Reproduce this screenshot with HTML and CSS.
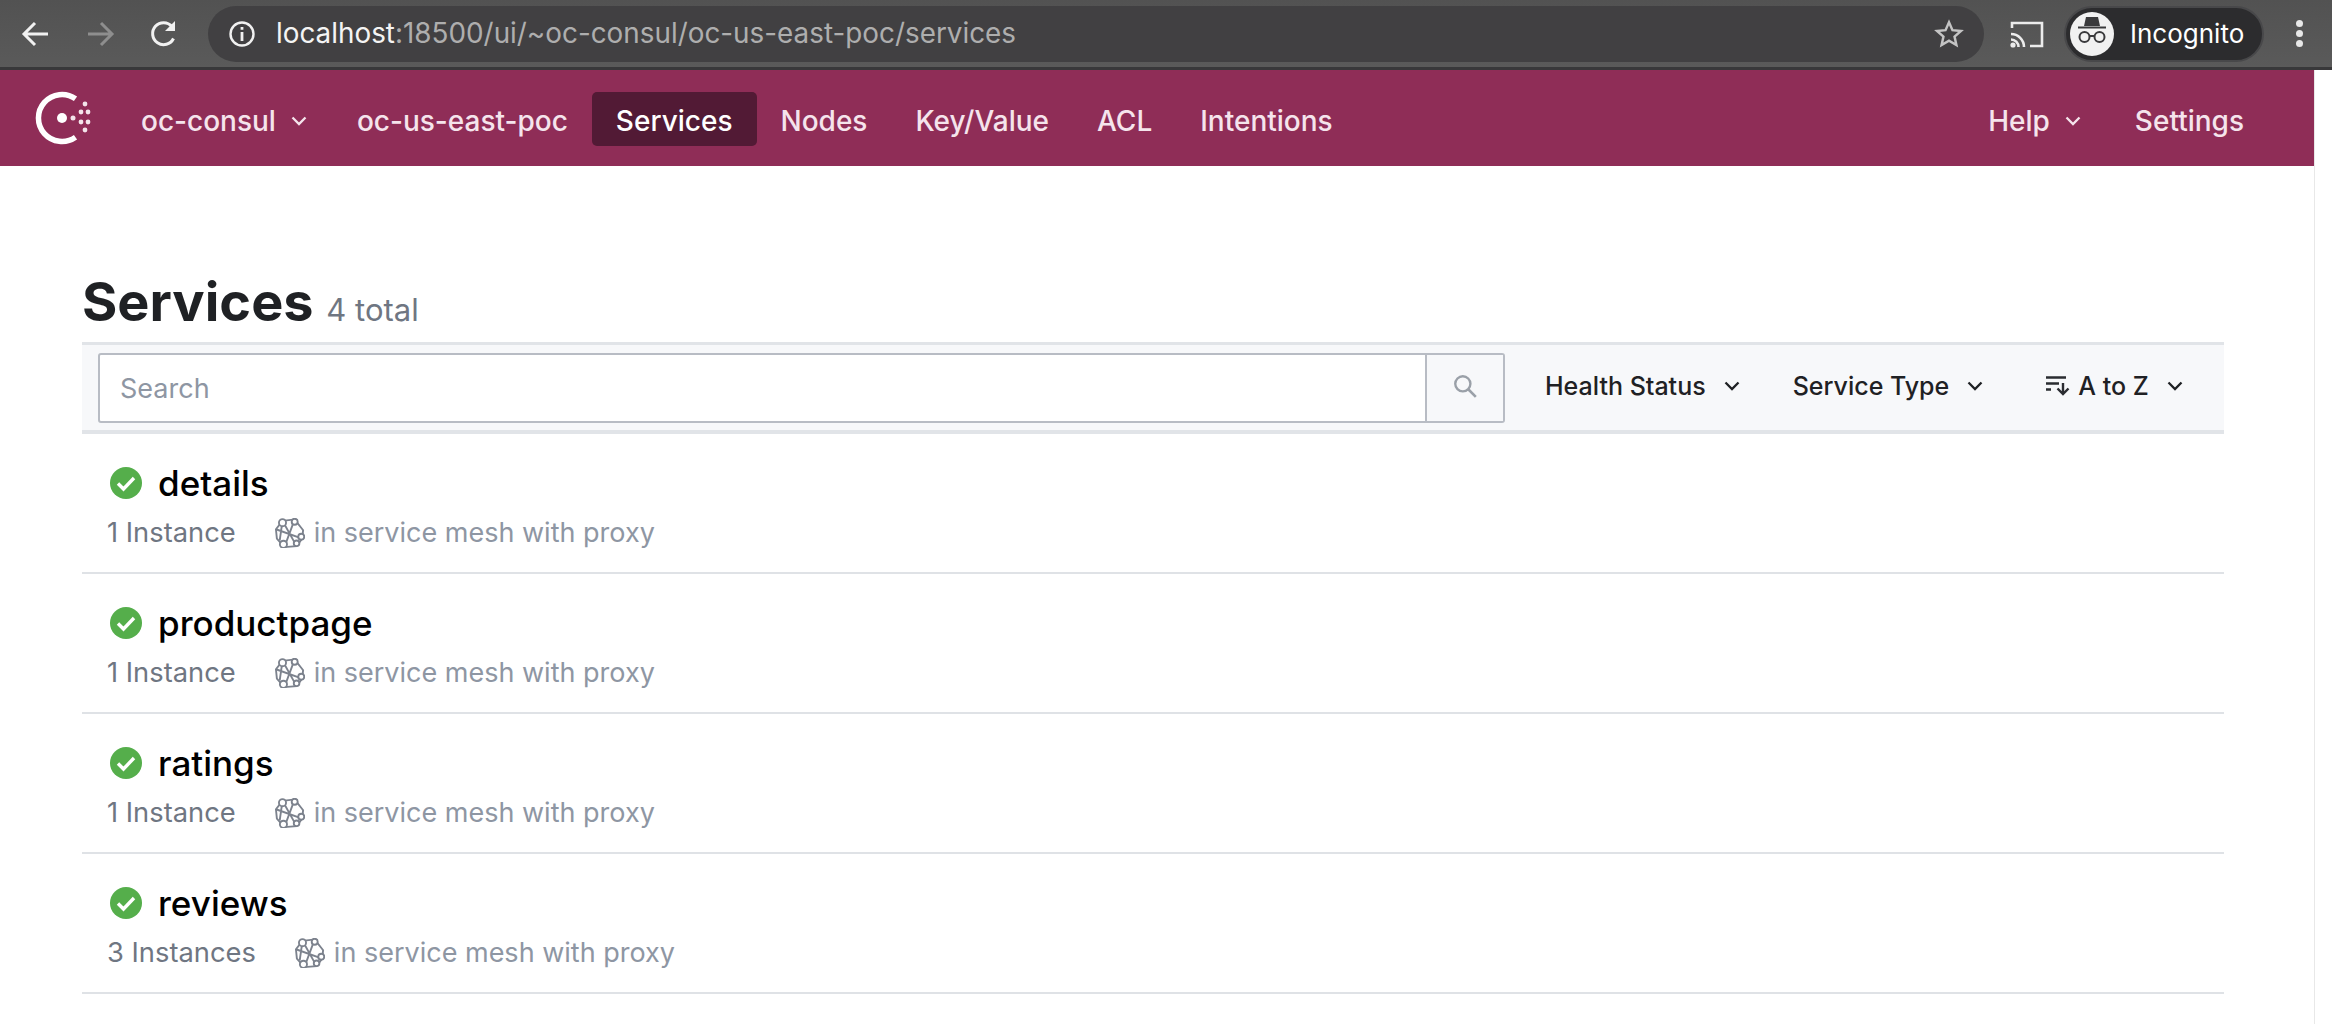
FILE: index.html
```html
<!DOCTYPE html>
<html lang="en">
<head>
    <meta charset="UTF-8">
    <title>Services - Consul</title>
    <link rel="stylesheet" href="styles.css">
</head>
<body>
    <svg class="defs" width="0" height="0">
        <symbol id="chev" viewBox="0 0 16 16"><path d="M1.500 4.500 8 11l6.500-6.500" fill="none" stroke="currentColor" stroke-width="2.300"/></symbol>
        <symbol id="check" viewBox="0 0 32 32"><circle cx="16" cy="16" r="16" fill="#55ae4b"/><path d="M8 16.500l5.500 5.500L24 11" fill="none" stroke="#fff" stroke-width="3.400"/></symbol>
        <symbol id="mesh" viewBox="0 0 32 32">
            <g fill="none" stroke="#7c828d" stroke-width="2">
                <path d="M8 3 21 1.500 30 13l-1 9-6 8-13 1-8-9-1-10z"/>
                <path d="M8 3 23 30M21 1.500 10 31M29 22 1 12M8 3 5 24"/>
            </g>
            <g fill="#fff" stroke="#7c828d" stroke-width="2">
                <circle cx="8" cy="5" r="3.800"/><circle cx="21" cy="4" r="3.200"/><circle cx="28" cy="20" r="3.200"/>
                <circle cx="9" cy="28" r="3.800"/><circle cx="23" cy="27" r="3"/>
            </g>
        </symbol>
    </svg>

    <header class="browser">
        <div class="browser-nav">
            <svg class="tool" viewBox="0 0 32 32"><path d="M28 16H5M15 5 4 16l11 11" fill="none" stroke="#f1f1f1" stroke-width="3"/></svg>
            <svg class="tool" viewBox="0 0 32 32"><path d="M4 16h23M17 5l11 11-11 11" fill="none" stroke="#8e8e8e" stroke-width="3"/></svg>
            <svg class="tool" viewBox="0 0 32 32"><path d="M25.500 20.500A11 11 0 1 1 24 8.500" fill="none" stroke="#f1f1f1" stroke-width="3"/><path d="M27 3v10H17z" fill="#f1f1f1"/></svg>
        </div>
        <div class="omnibox">
            <svg class="info" viewBox="0 0 28 28"><circle cx="14" cy="14" r="11.500" fill="none" stroke="#f1f1f1" stroke-width="2.400"/><path d="M12.600 12h2.800v9h-2.800zM12.600 7h2.800v2.800h-2.800z" fill="#f1f1f1"/></svg>
            <span class="url"><b>localhost</b>:18500/ui/~oc-consul/oc-us-east-poc/services</span>
            <svg class="star" viewBox="0 0 32 32"><path d="M16 3.500l3.700 8.400 9.100.9-6.900 6 2 9-7.900-4.700-7.900 4.700 2-9-6.900-6 9.100-.9z" fill="none" stroke="#c4c4c4" stroke-width="2.600"/></svg>
        </div>
        <svg class="cast" viewBox="0 0 34 28"><path d="M2 8V3h30v23H20" fill="none" stroke="#ececec" stroke-width="2.600"/><path d="M1 14a13 13 0 0 1 13 13M1 19.500a7.500 7.500 0 0 1 7.500 7.500" fill="none" stroke="#ececec" stroke-width="2.600"/><circle cx="3" cy="25" r="2.600" fill="#ececec"/></svg>
        <div class="profile">
            <svg class="avatar" viewBox="0 0 44 44">
                <circle cx="22" cy="22" r="22" fill="#f1f1f1"/>
                <path d="M16 5h12l2 9H14z" fill="#3a3a3c"/>
                <path d="M8 15.500h28" stroke="#3a3a3c" stroke-width="2"/>
                <circle cx="14.500" cy="25" r="5" fill="none" stroke="#3a3a3c" stroke-width="2"/>
                <circle cx="29.500" cy="25" r="5" fill="none" stroke="#3a3a3c" stroke-width="2"/>
                <path d="M19.500 24h5" stroke="#3a3a3c" stroke-width="2"/>
            </svg>
            <span>Incognito</span>
        </div>
        <div class="kebab"><i></i><i></i><i></i></div>
    </header>

    <div class="viewport">
        <div class="page">
            <nav class="topnav">
                <svg class="logo" viewBox="0 0 60 60">
                    <path d="M41.500 10.800A23.500 23.500 0 1 0 41.500 49.200" fill="none" stroke="#fff" stroke-width="5.500"/>
                    <circle cx="28" cy="30" r="5" fill="#fff"/><circle cx="39" cy="30" r="2.500" fill="#f3e4ea"/>
                    <circle cx="51" cy="16" r="2.400" fill="#f3e4ea"/><circle cx="47" cy="24" r="2.400" fill="#f3e4ea"/><circle cx="54" cy="24" r="2.400" fill="#f3e4ea"/>
                    <circle cx="47" cy="34" r="2.400" fill="#f3e4ea"/><circle cx="54" cy="34" r="2.400" fill="#f3e4ea"/><circle cx="51" cy="42" r="2.400" fill="#f3e4ea"/>
                </svg>
                <a class="nav-item">oc-consul <svg class="chev"><use href="#chev"/></svg></a>
                <a class="nav-item">oc-us-east-poc</a>
                <a class="nav-item active">Services</a>
                <a class="nav-item">Nodes</a>
                <a class="nav-item">Key/Value</a>
                <a class="nav-item">ACL</a>
                <a class="nav-item">Intentions</a>
                <div class="spacer"></div>
                <a class="nav-item help">Help <svg class="chev"><use href="#chev"/></svg></a>
                <a class="nav-item">Settings</a>
            </nav>

            <main class="content">
                <h1>Services <small>4 total</small></h1>

                <div class="toolbar">
                    <div class="search">
                        <span class="placeholder">Search</span>
                        <span class="search-btn">
                            <svg viewBox="0 0 24 24"><circle cx="10" cy="10" r="7" fill="none" stroke="#9aa0a8" stroke-width="2.200"/><path d="M15 15l7 7" stroke="#9aa0a8" stroke-width="2.400"/></svg>
                        </span>
                    </div>
                    <a class="filter health">Health Status <svg class="chev"><use href="#chev"/></svg></a>
                    <a class="filter type">Service Type <svg class="chev"><use href="#chev"/></svg></a>
                    <a class="filter sort">
                        <svg class="sort-icon" viewBox="0 0 24 20"><path d="M0 1.500h20M0 7.500h13M0 13.500h5M17 7v11M11.500 12.500 17 18l5.500-5.500" fill="none" stroke="#2a2c31" stroke-width="2.400"/></svg>
                        A to Z <svg class="chev"><use href="#chev"/></svg>
                    </a>
                </div>

                <ul class="services">
                    <li class="service">
                        <div class="name"><svg class="ok"><use href="#check"/></svg>details</div>
                        <div class="meta"><span class="count">1 Instance</span><svg class="mesh"><use href="#mesh"/></svg><span>in service mesh with proxy</span></div>
                    </li>
                    <li class="service">
                        <div class="name"><svg class="ok"><use href="#check"/></svg>productpage</div>
                        <div class="meta"><span class="count">1 Instance</span><svg class="mesh"><use href="#mesh"/></svg><span>in service mesh with proxy</span></div>
                    </li>
                    <li class="service">
                        <div class="name"><svg class="ok"><use href="#check"/></svg>ratings</div>
                        <div class="meta"><span class="count">1 Instance</span><svg class="mesh"><use href="#mesh"/></svg><span>in service mesh with proxy</span></div>
                    </li>
                    <li class="service">
                        <div class="name"><svg class="ok"><use href="#check"/></svg>reviews</div>
                        <div class="meta"><span class="count">3 Instances</span><svg class="mesh"><use href="#mesh"/></svg><span>in service mesh with proxy</span></div>
                    </li>
                </ul>
            </main>
        </div>
        <div class="scrollbar"></div>
    </div>
</body>
</html>
```

FILE: styles.css
```css
html, body {
    margin: 0;
    height: 1024px;
    overflow: hidden;
    background: #fff;
    font-family: Inter, "Noto Sans", sans-serif;
}
.defs {
    display: block;
    height: 0;
}

/* browser chrome */
.browser {
    height: 67px;
    border-bottom: 3px solid #38383a;
    background: linear-gradient(#525252, #5a5a5a);
    display: flex;
    align-items: center;
    color: #fff;
}
.browser-nav {
    display: flex;
    gap: 32px;
    padding-left: 20px;
    width: 208px;
    box-sizing: border-box;
}
.tool {
    width: 32px;
    height: 32px;
}
.omnibox {
    width: 1776px;
    height: 56px;
    border-radius: 28px;
    background: #414042;
    display: flex;
    align-items: center;
    box-sizing: border-box;
    padding: 0 20px;
}
.info {
    width: 28px;
    height: 28px;
    margin-right: 20px;
}
.url {
    flex: 1;
    padding-bottom: 2px;
    font-size: 27.850px;
    color: #aeaeae;
    white-space: nowrap;
}
.url b {
    font-weight: 400;
    color: #f4f4f4;
}
.star {
    width: 30px;
    height: 30px;
}
.cast {
    width: 34px;
    height: 28px;
    margin-left: 26px;
}
.profile {
    width: 200px;
    height: 56px;
    margin-left: 20px;
    box-sizing: border-box;
    border: 2px solid #48484a;
    border-radius: 28px;
    background: #2c2c2e;
    display: flex;
    align-items: center;
    gap: 16px;
    padding-left: 4px;
    font-size: 26px;
}
.avatar {
    width: 44px;
    height: 44px;
}
.kebab {
    margin-left: 32px;
    display: flex;
    flex-direction: column;
    gap: 3px;
}
.kebab i {
    width: 7px;
    height: 7px;
    border-radius: 50%;
    background: #e8e8e8;
}

.viewport {
    display: flex;
}
.page {
    flex: 1;
    min-width: 0;
}
.scrollbar {
    width: 17px;
    height: 954px;
    background: #fff;
    border-left: 1px solid #e8e8e8;
}

/* consul nav */
.topnav {
    height: 96px;
    background: #8f2d57;
    display: flex;
    align-items: center;
    padding: 0 46px 0 34px;
}
.logo {
    width: 60px;
    height: 60px;
    margin-right: 23px;
}
.nav-item {
    display: flex;
    align-items: center;
    height: 54px;
    box-sizing: border-box;
    margin-top: 2px;
    padding: 3px 24px 0;
    border-radius: 5px;
    color: #f5e4ec;
    font-size: 28px;
    font-weight: 500;
    white-space: nowrap;
}
.nav-item.active {
    background: #521a35;
    color: #fff;
}
.nav-item.help {
    margin-right: 4px;
}
.chev {
    width: 16px;
    height: 16px;
    margin: 0 2px 0 15px;
}
.spacer {
    flex: 1;
}

/* content */
.content {
    padding: 103px 90px 0 81px;
}
h1 {
    margin: 0;
    padding-left: 1px;
    font-size: 54px;
    line-height: 66px;
    font-weight: 700;
    color: #1f2124;
}
h1 small {
    font-size: 31px;
    line-height: 1;
    font-weight: 400;
    color: #6f7682;
}
.toolbar {
    margin: 7px 0 0 1px;
    height: 92px;
    box-sizing: border-box;
    background: #f7f8fa;
    border-top: 3px solid #e1e4e8;
    border-bottom: 4px solid #e1e4e8;
    display: flex;
    align-items: center;
    padding-left: 16px;
}
.search {
    width: 1407px;
    height: 70px;
    box-sizing: border-box;
    border: 2px solid #b8bcc4;
    border-radius: 3px;
    background: #fff;
    display: flex;
    align-items: center;
}
.placeholder {
    flex: 1;
    padding: 2px 0 0 20px;
    font-size: 27px;
    color: #8e96a3;
}
.search-btn {
    width: 78px;
    height: 100%;
    box-sizing: border-box;
    border-left: 2px solid #b8bcc4;
    background: #f7f8fa;
    padding-bottom: 4px;
    display: flex;
    align-items: center;
    justify-content: center;
}
.search-btn svg {
    width: 26px;
    height: 26px;
}
.filter {
    display: flex;
    align-items: center;
    padding-bottom: 3px;
    font-size: 25px;
    font-weight: 500;
    color: #1f2124;
    white-space: nowrap;
}
.filter .chev {
    margin: 0 0 0 18px;
}
.health {
    margin-left: 40px;
}
.type {
    margin-left: 53px;
}
.sort {
    margin-left: 63px;
}
.sort-icon {
    width: 24px;
    height: 20px;
    margin-right: 8px;
}

.services {
    list-style: none;
    margin: 0 0 0 1px;
    padding: 0;
}
.service {
    height: 140px;
    box-sizing: border-box;
    border-bottom: 2px solid #dfe2e6;
    padding: 29px 0 0 25px;
}
.name {
    display: flex;
    align-items: center;
    font-size: 35px;
    line-height: 40px;
    font-weight: 500;
    color: #000;
}
.ok {
    width: 32px;
    height: 32px;
    margin: 0 16px 0 3px;
}
.meta {
    display: flex;
    align-items: center;
    margin-top: 10px;
    font-size: 27px;
    line-height: 40px;
    color: #8e96a3;
}
.count {
    color: #6f7682;
    font-size: 27.300px;
    margin-right: 39px;
}
.mesh {
    width: 30px;
    height: 30px;
    margin-right: 9px;
}
```
